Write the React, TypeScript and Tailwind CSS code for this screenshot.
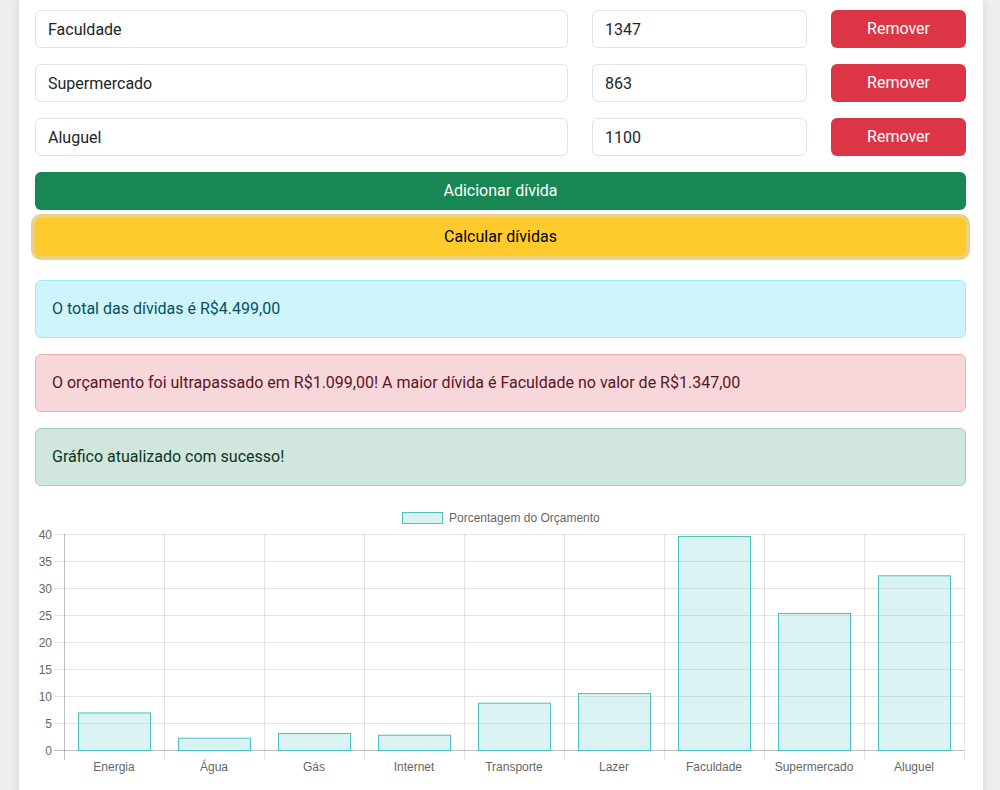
import React from "react";

const dividas = [
  { nome: "Faculdade", valor: "1347" },
  { nome: "Supermercado", valor: "863" },
  { nome: "Aluguel", valor: "1100" },
];

const chartData = [
  { label: "Energia", value: 6.96 },
  { label: "Água", value: 2.28 },
  { label: "Gás", value: 3.15 },
  { label: "Internet", value: 2.83 },
  { label: "Transporte", value: 8.76 },
  { label: "Lazer", value: 10.55 },
  { label: "Faculdade", value: 39.62 },
  { label: "Supermercado", value: 25.38 },
  { label: "Aluguel", value: 32.35 },
];

const font = { fontFamily: '"Segoe UI", Roboto, "Noto Sans", sans-serif' };

function DividaRow({ nome, valor }: { nome: string; valor: string }) {
  return (
    <div className="flex gap-6 mb-4">
      <input
        defaultValue={nome}
        className="flex-1 h-[38px] px-3 border border-[#dee2e6] rounded-md text-base text-[#212529] bg-white outline-none"
      />
      <input
        defaultValue={valor}
        className="w-[215px] h-[38px] px-3 border border-[#dee2e6] rounded-md text-base text-[#212529] bg-white outline-none"
      />
      <button className="w-[135px] h-[38px] bg-[#dc3545] text-white rounded-md text-base">
        Remover
      </button>
    </div>
  );
}

function Alert({ tone, children }: { tone: "info" | "danger" | "success"; children: React.ReactNode }) {
  const cls = {
    info: "bg-[#cff4fc] border-[#9eeaf9] text-[#055160]",
    danger: "bg-[#f8d7da] border-[#f1aeb5] text-[#58151c]",
    success: "bg-[#d1e7dd] border-[#a3cfbb] text-[#0a3622]",
  }[tone];
  return <div className={`border rounded-md p-4 mb-4 leading-6 ${cls}`}>{children}</div>;
}

function BarChart() {
  // chart area in svg coords (svg origin = x 35, y 502 of the page)
  const left = 29;
  const right = 929;
  const top = 32;
  const bottom = 248;
  const perUnit = (bottom - top) / 40;
  const cat = (right - left) / chartData.length;
  const ticks = [0, 5, 10, 15, 20, 25, 30, 35, 40];
  const sans = "'Liberation Sans', Arial, sans-serif";

  return (
    <svg width="931" height="290" className="block">
      <rect x="367.5" y="10.5" width="40" height="11" fill="rgba(75,192,192,0.2)" stroke="rgb(75,192,192)" />
      <text x="414" y="20" fontSize="12" fill="#666" fontFamily={sans}>
        Porcentagem do Orçamento
      </text>
      {ticks.map((t) => {
        const y = bottom - t * perUnit + 0.5;
        return (
          <g key={t}>
            <line
              x1={left - 10}
              x2={right}
              y1={y}
              y2={y}
              stroke={t === 0 ? "rgba(0,0,0,0.25)" : "rgba(0,0,0,0.1)"}
            />
            <text x={left - 12} y={y + 4} fontSize="12" fill="#666" textAnchor="end" fontFamily={sans}>
              {t}
            </text>
          </g>
        );
      })}
      {Array.from({ length: chartData.length + 1 }).map((_, i) => (
        <line
          key={i}
          x1={left + i * cat + 0.5}
          x2={left + i * cat + 0.5}
          y1={top}
          y2={bottom + 10}
          stroke={i === 0 ? "rgba(0,0,0,0.25)" : "rgba(0,0,0,0.1)"}
        />
      ))}
      {chartData.map((d, i) => {
        const cx = left + i * cat + cat / 2;
        const h = d.value * perUnit;
        return (
          <g key={d.label}>
            <rect
              x={cx - 35.5}
              y={bottom - h + 0.5}
              width="72"
              height={h}
              fill="rgba(75,192,192,0.2)"
              stroke="rgb(75,192,192)"
            />
            <text x={cx} y={269} fontSize="12" fill="#666" textAnchor="middle" fontFamily={sans}>
              {d.label}
            </text>
          </g>
        );
      })}
    </svg>
  );
}

export default function App() {
  return (
    <div className="min-h-[790px] bg-[#efefef] overflow-hidden" style={font}>
      <div className="ml-[19px] w-[964px] bg-white shadow-[0_0_10px_rgba(0,0,0,0.12)] pl-4 pr-[17px] pt-[10px] pb-10">
        {dividas.map((d) => (
          <DividaRow key={d.nome} nome={d.nome} valor={d.valor} />
        ))}
        <button className="w-full h-[38px] bg-[#198754] text-white rounded-md text-base">
          Adicionar dívida
        </button>
        <button className="w-full h-[38px] mt-2 bg-[#ffca2c] border border-[#ffc720] text-black rounded-md text-base shadow-[0_0_0_4px_rgba(217,164,6,0.5)]">
          Calcular dívidas
        </button>
        <div className="mt-6">
          <Alert tone="info">O total das dívidas é R$4.499,00</Alert>
          <Alert tone="danger">
            O orçamento foi ultrapassado em R$1.099,00! A maior dívida é Faculdade no valor de R$1.347,00
          </Alert>
          <Alert tone="success">Gráfico atualizado com sucesso!</Alert>
        </div>
        <BarChart />
      </div>
    </div>
  );
}
